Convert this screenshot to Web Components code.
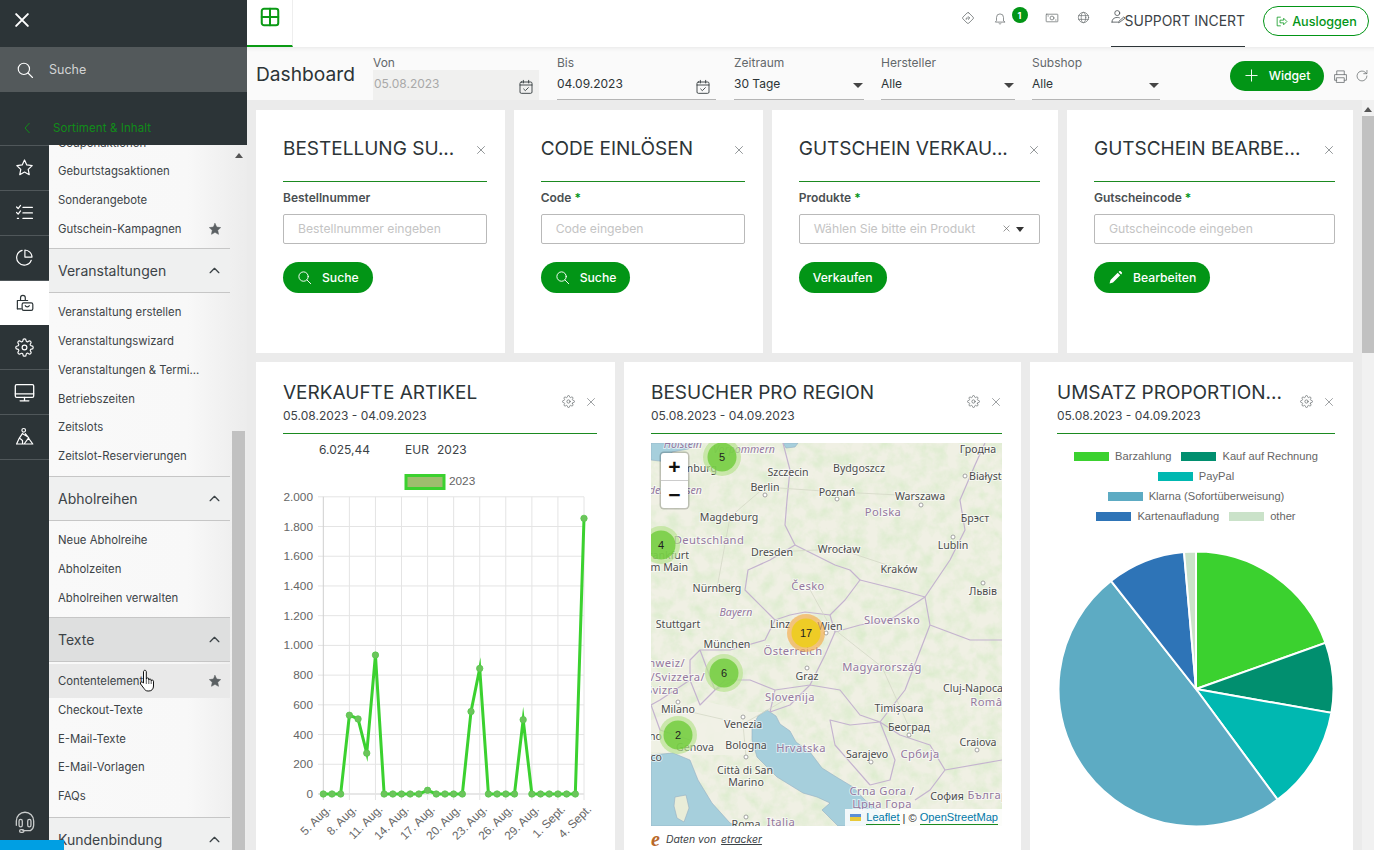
<!DOCTYPE html>
<html lang="de">
<head>
<meta charset="utf-8">
<title>Dashboard</title>
<style>
  html, body { margin: 0; padding: 0; height: 100%; overflow: hidden; }
  body { font-family: Inter, "Noto Sans", "Liberation Sans", sans-serif; color: #2c3437; background: #ebebeb; }
</style>
</head>
<body>
<app-shell>
  <side-nav slot="nav">
    <nav-group>
      <nav-item>Couponaktionen</nav-item>
      <nav-item>Geburtstagsaktionen</nav-item>
      <nav-item>Sonderangebote</nav-item>
      <nav-item star>Gutschein-Kampagnen</nav-item>
    </nav-group>
    <nav-group label="Veranstaltungen">
      <nav-item>Veranstaltung erstellen</nav-item>
      <nav-item>Veranstaltungswizard</nav-item>
      <nav-item>Veranstaltungen &amp; Termi...</nav-item>
      <nav-item>Betriebszeiten</nav-item>
      <nav-item>Zeitslots</nav-item>
      <nav-item>Zeitslot-Reservierungen</nav-item>
    </nav-group>
    <nav-group label="Abholreihen" style="--pt:5.3px">
      <nav-item>Neue Abholreihe</nav-item>
      <nav-item>Abholzeiten</nav-item>
      <nav-item>Abholreihen verwalten</nav-item>
    </nav-group>
    <nav-group label="Texte" active style="--pb:6.5px">
      <nav-item star hover>Contentelemente</nav-item>
      <nav-item>Checkout-Texte</nav-item>
      <nav-item>E-Mail-Texte</nav-item>
      <nav-item>E-Mail-Vorlagen</nav-item>
      <nav-item>FAQs</nav-item>
    </nav-group>
    <nav-group label="Kundenbindung"></nav-group>
  </side-nav>

  <top-bar slot="top"></top-bar>

  <dash-toolbar slot="tools">
    <filter-field label="Von" value="05.08.2023" kind="date" disabled style="width:166px"></filter-field>
    <filter-field label="Bis" value="04.09.2023" kind="date" style="width:159px;margin-left:1px"></filter-field>
    <filter-field label="Zeitraum" value="30 Tage" kind="select" style="width:130px;margin-left:1px"></filter-field>
    <filter-field label="Hersteller" value="Alle" kind="select" style="width:134px"></filter-field>
    <filter-field label="Subshop" value="Alle" kind="select" style="width:128px"></filter-field>
  </dash-toolbar>

  <widget-area slot="content">
    <widget-row columns="249px 249.4px 286.6px 286px" gap="8.67px">
      <form-widget heading="BESTELLUNG SU..." label="Bestellnummer" placeholder="Bestellnummer eingeben" action="Suche" icon="search"></form-widget>
      <form-widget heading="CODE EINLÖSEN" label="Code" required placeholder="Code eingeben" action="Suche" icon="search"></form-widget>
      <form-widget heading="GUTSCHEIN VERKAU..." label="Produkte" required placeholder="Wählen Sie bitte ein Produkt" select action="Verkaufen"></form-widget>
      <form-widget heading="GUTSCHEIN BEARBE..." label="Gutscheincode" required placeholder="Gutscheincode eingeben" action="Bearbeiten" icon="pencil"></form-widget>
    </widget-row>
    <widget-row columns="359px 397px 323px" gap="9px">
      <widget-card heading="VERKAUFTE ARTIKEL" dates="05.08.2023 - 04.09.2023"><line-chart></line-chart></widget-card>
      <widget-card heading="BESUCHER PRO REGION" dates="05.08.2023 - 04.09.2023" style="padding-right:19px"><map-panel></map-panel></widget-card>
      <widget-card heading="UMSATZ PROPORTION..." dates="05.08.2023 - 04.09.2023"><pie-chart></pie-chart></widget-card>
    </widget-row>
  </widget-area>
</app-shell>

<script>
const ICONS = {
  x: '<path d="M5 5l14 14M19 5L5 19"/>',
  search: '<circle cx="10.5" cy="10.5" r="7.5"/><path d="M16 16l6 6"/>',
  star: '<path d="M12 2.5l2.9 6.2 6.8.9-5 4.7 1.3 6.8-6-3.4-6 3.4 1.3-6.8-5-4.7 6.8-.9z"/>',
  checks: '<path d="M2 5l2 2 3-4M2 12l2 2 3-4M3 19.5h1.5M10 5.5h12M10 12.5h12M10 19.5h12"/>',
  pie: '<path d="M20.5 15.5A9.5 9.5 0 1 1 9 3"/><path d="M21.5 11.5A9.5 9.5 0 0 0 12.5 2.5v9z"/>',
  bag: '<path d="M3 20V9.5h13M7 9V6a3 3 0 0 1 6 0v3"/><rect x="9" y="12.5" width="13.5" height="9.5" rx="2"/><path d="M13 16c.5 2 4.5 2 5 0"/><path d="M3 20h5"/>',
  gear: '<circle cx="12" cy="12" r="3"/><path d="M19.4 15a1.65 1.65 0 0 0 .33 1.82l.06.06a2 2 0 0 1 0 2.83 2 2 0 0 1-2.83 0l-.06-.06a1.65 1.65 0 0 0-1.82-.33 1.65 1.65 0 0 0-1 1.51V21a2 2 0 0 1-2 2 2 2 0 0 1-2-2v-.09A1.65 1.65 0 0 0 9 19.4a1.65 1.65 0 0 0-1.82.33l-.06.06a2 2 0 0 1-2.83 0 2 2 0 0 1 0-2.83l.06-.06a1.65 1.65 0 0 0 .33-1.82 1.65 1.65 0 0 0-1.51-1H3a2 2 0 0 1-2-2 2 2 0 0 1 2-2h.09A1.65 1.65 0 0 0 4.6 9a1.65 1.65 0 0 0-.33-1.82l-.06-.06a2 2 0 0 1 0-2.83 2 2 0 0 1 2.83 0l.06.06a1.65 1.65 0 0 0 1.82.33H9a1.65 1.65 0 0 0 1-1.51V3a2 2 0 0 1 2-2 2 2 0 0 1 2 2v.09a1.65 1.65 0 0 0 1 1.51 1.65 1.65 0 0 0 1.82-.33l.06-.06a2 2 0 0 1 2.83 0 2 2 0 0 1 0 2.83l-.06.06a1.65 1.65 0 0 0-.33 1.82V9a1.65 1.65 0 0 0 1.51 1H21a2 2 0 0 1 2 2 2 2 0 0 1-2 2h-.09a1.65 1.65 0 0 0-1.51 1z"/>',
  monitor: '<rect x="1.5" y="3" width="21" height="14.5" rx="1.5"/><path d="M1.5 13.5h21M12 17.5v4M7 21.5h10"/>',
  worker: '<circle cx="11" cy="4.2" r="2.3"/><path d="M9.5 8L5.5 14 2 21.5M5.5 14l4 3v4.5M9.5 8.5l6 3.5M13 8.5l4.5 5.5M11.5 21.5L17 14l5.5 7.5zM2 21.5h20"/>',
  headset: '<path d="M4 15V11a8 8 0 0 1 16 0v4a6 6 0 0 1-3 5H10"/><rect x="6.5" y="9.5" width="3" height="7" rx="1.5"/><rect x="14.5" y="9.5" width="3" height="7" rx="1.5"/><rect x="7" y="19" width="4" height="2.6" rx="1.3"/>',
  chevron: '<path d="M5 15.5l7-7 7 7"/>',
  grid: '<rect x="3" y="3" width="18" height="18" rx="2.5"/><path d="M3 12h18M12 3v18"/>',
  diamond: '<rect x="4.8" y="4.8" width="14.4" height="14.4" rx="2" transform="rotate(45 12 12)"/><path d="M9 14.5v-2.5h5M12.5 9.5l2.5 2.5-2.5 2.5"/>',
  bell: '<path d="M18 16.5V11a6 6 0 0 0-12 0v5.5L4 19h16zM10 21.5c.5 1 3.5 1 4 0"/>',
  money: '<rect x="2" y="5.5" width="20" height="13" rx="1"/><circle cx="12" cy="12" r="3.3"/><path d="M5 8.5h1M18 15.5h1"/>',
  globe: '<circle cx="12" cy="12" r="9.5"/><ellipse cx="12" cy="12" rx="4.2" ry="9.5"/><path d="M3 8.5h18M3 15.5h18"/>',
  useredit: '<circle cx="10" cy="6.5" r="4"/><path d="M1.5 21c0-5 3.5-7.5 8.5-7.5 1.5 0 2.5.2 3.5.6M1.5 21h9M14 21l-2 1 .6-2.4 8-7 1.6 1.6z"/>',
  logout: '<path d="M10 4H4v16h6"/><path d="M10 9.5h6V6l6 6-6 6v-3.5h-6z"/>',
  plus: '<path d="M12 3v18M3 12h18"/>',
  print: '<path d="M6 9V3h12v6M6 18H2.5v-9h19v9H18"/><rect x="6" y="14" width="12" height="7.5"/>',
  refresh: '<path d="M20.5 12a8.5 8.5 0 1 1-3-6.5L20 8M20.5 2.5V8H15"/>',
  calendar: '<rect x="3" y="4.5" width="18" height="17" rx="2"/><path d="M3 9h18M8 2v4M16 2v4M8.5 15l2.5 2.5 4.5-4.5"/>',
  pencil: '<path fill="currentColor" stroke="none" d="M15.5 4.5l4 4L8 20l-5.5 1.5L4 16zM17 3l1-1c.8-.7 1.6-.7 2.3 0l1.7 1.7c.7.7.7 1.5 0 2.3l-1 1z"/>'
};

class UiIcon extends HTMLElement {
  connectedCallback() {
    const size = this.getAttribute('size') || 16;
    const sw = this.getAttribute('stroke') || 1.6;
    const fill = this.hasAttribute('solid') ? 'currentColor' : 'none';
    this.attachShadow({ mode: 'open' }).innerHTML = `
      <style>:host{display:inline-flex;flex:none;line-height:0}</style>
      <svg width="${size}" height="${size}" viewBox="0 0 24 24" fill="${fill}" stroke="currentColor"
        stroke-width="${sw}" stroke-linecap="round" stroke-linejoin="round">${ICONS[this.getAttribute('name')] || ''}</svg>`;
  }
}
customElements.define('ui-icon', UiIcon);

class AppShell extends HTMLElement {
  constructor() {
    super();
    this.attachShadow({ mode: 'open' }).innerHTML = `
      <style>
        :host { display: grid; grid-template-columns: 247px 1fr; width: 1374px; height: 850px; overflow: hidden; position: relative; }
        .main { display: grid; grid-template-rows: 47px 53px 1fr; min-width: 0; height: 850px; overflow: hidden; }
      </style>
      <slot name="nav"></slot>
      <div class="main">
        <slot name="top"></slot>
        <slot name="tools"></slot>
        <slot name="content"></slot>
      </div>`;
  }
}
customElements.define('app-shell', AppShell);

class SideNav extends HTMLElement {
  constructor() {
    super();
    const rail = [['star'], ['checks'], ['pie'], ['bag', true], ['gear'], ['monitor'], ['worker']]
      .map(([n, on]) => `<div class="rail-item ${on ? 'on' : ''}"><ui-icon name="${n}" size="${n === 'monitor' ? 21 : 19}" stroke="1.5"></ui-icon></div>`).join('');
    this.attachShadow({ mode: 'open' }).innerHTML = `
      <style>
        :host { display: flex; flex-direction: column; height: 850px; background: #2c3437; position: relative; overflow: hidden; }
        .close { height: 47px; flex: none; display: flex; align-items: center; padding: 0 0 7px 12px; box-sizing: border-box; color: #fff; }
        .search { height: 45px; flex: none; background: #53595b; display: flex; align-items: center; color: #fff; padding-left: 16px; gap: 15px; font-size: 12.5px; }
        .search span { color: #d2d4d4; }
        .section { height: 53px; flex: none; display: flex; align-items: center; color: #118c19; font-size: 11.5px; padding: 18px 0 0 24px; box-sizing: border-box; gap: 23px; letter-spacing: .1px; }
        .body { flex: 1; display: flex; min-height: 0; }
        .rail { width: 49px; flex: none; display: flex; flex-direction: column; color: #fff; border-top: 1px solid #50575a; padding-bottom: 15px; box-sizing: border-box; }
        .rail-item { height: 44.85px; flex: none; display: flex; align-items: center; justify-content: center; border-bottom: 1px solid #50575a; box-sizing: border-box; }
        .rail-item.on { background: #fff; color: #2c3437; border-bottom-color: #fff; }
        .help { margin-top: auto; display: flex; justify-content: center; color: #c9cccc; }
        .panel { flex: 1; min-width: 0; display: flex; background: linear-gradient(90deg, #f9f9f9 0, #f8f8f8 70%, #ececec 100%); overflow: hidden; }
        .list { width: 181px; flex: none; margin-top: -21px; }
        .scroll { width: 14px; margin-left: 2px; position: relative; display: flex; flex-direction: column; }
        .arrow { width: 0; height: 0; border: 4px solid transparent; border-top: 0; border-bottom: 5px solid #555; margin: 8px auto 0; }
        .thumb { position: absolute; top: 286px; bottom: 0; left: 0; width: 13px; background: #c1c1c1; }
        .blue { position: absolute; left: 0; bottom: 0; width: 64px; height: 10px; background: #009fe3; }
      </style>
      <div class="close"><ui-icon name="x" size="20" stroke="2.4"></ui-icon></div>
      <div class="search"><ui-icon name="search" size="18" stroke="1.5"></ui-icon><span>Suche</span></div>
      <div class="section"><svg width="6" height="12" viewBox="0 0 6 12" fill="none" stroke="#118c19"><path d="M5.5 1L1 6l4.5 5"/></svg><span>Sortiment &amp; Inhalt</span></div>
      <div class="body">
        <div class="rail">${rail}<div class="help"><ui-icon name="headset" size="26" stroke="1.2"></ui-icon></div></div>
        <div class="panel">
          <div class="list"><slot></slot></div>
          <div class="scroll"><div class="arrow"></div><div class="thumb"></div></div>
        </div>
      </div>
      <div class="blue"></div>`;
  }
}
customElements.define('side-nav', SideNav);

class NavGroup extends HTMLElement {
  connectedCallback() {
    const label = this.getAttribute('label');
    const head = label ? `<div class="head ${this.hasAttribute('active') ? 'active' : ''}"><span>${label}</span><ui-icon name="chevron" size="15" stroke="2"></ui-icon></div>` : '';
    this.attachShadow({ mode: 'open' }).innerHTML = `
      <style>
        :host { display: block; }
        .head { height: 45px; box-sizing: border-box; border-top: 1px solid #c6c6c6; border-bottom: 1px solid #c6c6c6; background: #eff0f0; display: flex; align-items: center; justify-content: space-between; padding: 0 8px 0 9px; font-size: 14px; color: #3c4347; }
        .head.active { background: #dedfdf; }
        .items { padding: var(--pt, 4.3px) 0 var(--pb, 5px); }
      </style>
      ${head}<div class="items"><slot></slot></div>`;
  }
}
customElements.define('nav-group', NavGroup);

class NavItem extends HTMLElement {
  connectedCallback() {
    const star = this.hasAttribute('star') ? '<ui-icon name="star" size="14" solid stroke="1" style="color:#5b6063"></ui-icon>' : '';
    const hover = this.hasAttribute('hover');
    const cursor = hover ? `<svg class="hand" width="18" height="24" viewBox="0 0 18 24"><path fill="#fff" stroke="#111" stroke-width="1" stroke-linejoin="round" d="M4.5 14V2.8c0-2 2.8-2 2.8 0V10c0-1.4 2.5-1.4 2.5 0v1c0-1.3 2.4-1.3 2.4 0v1c0-1.2 2.3-1.2 2.3.2V17c0 3-1.8 5-4.6 5H9c-2 0-3-.8-4-2.5L1.6 15c-1-1.6 1-2.8 2.1-1.6z"/><path d="M7.3 10v5M9.8 11v4M12.2 12v3" stroke="#111" stroke-width=".7"/></svg>` : '';
    this.attachShadow({ mode: 'open' }).innerHTML = `
      <style>
        :host { display: flex; align-items: center; justify-content: space-between; height: ${hover ? 33.6 : 28.8}px; box-sizing: border-box; padding: 0 8px 0 9px; font-size: 11.35px; color: #3c4347; position: relative; ${hover ? 'background:#e9e9e9; margin: -2.4px 0;' : ''} }
        .hand { position: absolute; left: 90px; top: 5px; }
      </style>
      <span><slot></slot></span>${star}${cursor}`;
  }
}
customElements.define('nav-item', NavItem);

class TopBar extends HTMLElement {
  constructor() {
    super();
    this.attachShadow({ mode: 'open' }).innerHTML = `
      <style>
        :host { display: flex; align-items: stretch; background: #fff; height: 47px; color: #6b7072; }
        .tab { width: 46px; box-sizing: border-box; display: flex; align-items: center; justify-content: center; padding-bottom: 11px; color: #0a9a14; border-bottom: 2px solid #0a9a14; border-right: 1px solid #eee; }
        .right { margin-left: auto; display: flex; align-items: center; padding-right: 5px; }
        .ic { width: 32px; display: flex; justify-content: center; position: relative; padding-bottom: 12px; }
        .badge { position: absolute; left: 28px; top: -3.5px; width: 16px; height: 16px; border-radius: 50%; background: #029516; color: #fff; font-size: 9px; font-weight: 700; display: flex; align-items: center; justify-content: center; }
        .user { display: flex; align-items: center; align-self: stretch; margin-left: 11px; border-bottom: 1px solid #2c3437; box-sizing: border-box; font-size: 13.95px; color: #3c4347; padding-bottom: 6px; }
        .user span { margin-left: -1px; }
        .user ui-icon { margin-top: -7px; }
        .logout { margin-left: 18px; width: 106px; height: 30px; box-sizing: border-box; border: 1px solid #029516; border-radius: 15px; color: #029516; display: flex; align-items: center; justify-content: center; gap: 4px; font-size: 12.6px; font-weight: 500; margin-top: -5px; }
      </style>
      <div class="tab"><ui-icon name="grid" size="22" stroke="2.2"></ui-icon></div>
      <div class="right">
        <div class="ic"><ui-icon name="diamond" size="14" stroke="1.3"></ui-icon></div>
        <div class="ic"><ui-icon name="bell" size="14" stroke="1.3"></ui-icon><span class="badge">1</span></div>
        <div class="ic" style="margin-left:20px"><ui-icon name="money" size="14" stroke="1.3"></ui-icon></div>
        <div class="ic"><ui-icon name="globe" size="13" stroke="1.3"></ui-icon></div>
        <div class="user"><ui-icon name="useredit" size="15" stroke="1.2"></ui-icon><span>SUPPORT INCERT</span></div>
        <div class="logout"><ui-icon name="logout" size="13" stroke="1.4"></ui-icon>Ausloggen</div>
      </div>`;
  }
}
customElements.define('top-bar', TopBar);

class DashToolbar extends HTMLElement {
  constructor() {
    super();
    this.attachShadow({ mode: 'open' }).innerHTML = `
      <style>
        :host { display: flex; align-items: flex-start; background: #fafafa; height: 53px; padding: 8px 5px 0 9px; box-sizing: border-box; box-shadow: inset 0 5px 4px -4px #e6e6e6; }
        h1 { margin: 7px 0 0; width: 117px; flex: none; font-size: 19.2px; font-weight: 400; color: #2c3437; line-height: 24px; }
        .fields { display: flex; gap: 17px; }
        .tools { margin-left: auto; display: flex; align-items: center; color: #6b7072; margin-top: 6px; }
        .btn { margin-right: 9px; }
        .tools ui-icon + ui-icon { margin-left: 7px; }
      </style>
      <h1>Dashboard</h1>
      <div class="fields"><slot></slot></div>
      <div class="tools">
        <pill-button icon="plus" class="btn" style="width:94px;height:30px">Widget</pill-button>
        <ui-icon name="print" size="15" stroke="1.3"></ui-icon>
        <ui-icon name="refresh" size="14" stroke="1.3"></ui-icon>
      </div>`;
  }
}
customElements.define('dash-toolbar', DashToolbar);

class FilterField extends HTMLElement {
  connectedCallback() {
    const off = this.hasAttribute('disabled');
    const date = this.getAttribute('kind') === 'date';
    const end = date
      ? '<ui-icon name="calendar" size="16" stroke="1.3" class="cal"></ui-icon>'
      : '<span class="caret"></span>';
    this.attachShadow({ mode: 'open' }).innerHTML = `
      <style>
        :host { display: block; flex: none; }
        label { display: block; font-size: 12px; line-height: 15px; color: #63686b; }
        .box { height: 30px; box-sizing: border-box; display: flex; align-items: center; justify-content: space-between; font-size: 12px; color: #2c3437; border-bottom: 1px solid #b5b5b5; padding: 0 ${date ? 5 : 1}px 3px 0; }
        .box.off { background: #f0f0ef; border-bottom-color: #f0f0ef; color: #a9a9a9; padding-left: 1px; }
        .cal { color: #2c3437; margin-top: 7px; }
        .caret { width: 0; height: 0; border: 5px solid transparent; border-top: 5px solid #444; border-bottom: 0; margin-top: 4px; }
      </style>
      <label>${this.getAttribute('label')}</label>
      <div class="box ${off ? 'off' : ''}"><span>${this.getAttribute('value')}</span>${end}</div>`;
  }
}
customElements.define('filter-field', FilterField);

class PillButton extends HTMLElement {
  connectedCallback() {
    const icon = this.getAttribute('icon');
    this.attachShadow({ mode: 'open' }).innerHTML = `
      <style>
        :host { display: inline-flex; align-items: center; justify-content: center; gap: 10px; height: 31px; padding: 0 14px 1px; box-sizing: border-box; border-radius: 16px; background: #029516; color: #fff; font-size: 12.2px; font-weight: 500; flex: none; }
      </style>
      ${icon ? `<ui-icon name="${icon}" size="15" stroke="1.5"></ui-icon>` : ''}<span><slot></slot></span>`;
  }
}
customElements.define('pill-button', PillButton);

class WidgetArea extends HTMLElement {
  constructor() {
    super();
    this.attachShadow({ mode: 'open' }).innerHTML = `
      <style>
        :host { display: flex; background: #ebebeb; min-height: 0; overflow: hidden; }
        .rows { width: 1115px; flex: none; box-sizing: border-box; padding: 10px 9px 0; display: flex; flex-direction: column; gap: 9px; }
        .bar { width: 12px; flex: none; background: #f1f1f1; position: relative; }
        .bar i { display: block; width: 0; height: 0; border: 4px solid transparent; border-top: 0; border-bottom: 5px solid #555; margin: 7px auto 0; }
        .bar b { display: block; margin-top: 4px; height: 237px; background: #c1c1c1; }
      </style>
      <div class="rows"><slot></slot></div>
      <div class="bar"><i></i><b></b></div>`;
  }
}
customElements.define('widget-area', WidgetArea);

class WidgetRow extends HTMLElement {
  connectedCallback() {
    this.attachShadow({ mode: 'open' }).innerHTML = `
      <style>:host { display: grid; grid-template-columns: ${this.getAttribute('columns')}; column-gap: ${this.getAttribute('gap')}; flex: none; }</style><slot></slot>`;
  }
}
customElements.define('widget-row', WidgetRow);

const CARD_STYLE = `
  :host { display: block; background: #fff; box-sizing: border-box; padding: 0 18px 0 27px; min-width: 0; }
  .head { display: flex; align-items: center; border-bottom: 1px solid #1b8a20; }
  h2 { margin: 0; font-size: 19px; line-height: 24px; font-weight: 400; color: #2c3437; white-space: nowrap; }
  .acts { margin-left: auto; display: flex; align-items: center; gap: 10px; color: #6b7072; }
  .date { font-size: 12px; line-height: 16px; color: #3c4347; margin-top: 3px; }
`;

class FormWidget extends HTMLElement {
  connectedCallback() {
    const a = n => this.getAttribute(n);
    const req = this.hasAttribute('required') ? ' <em>*</em>' : '';
    const tail = this.hasAttribute('select')
      ? '<ui-icon name="x" size="9" stroke="1.8" style="color:#666;margin-left:auto"></ui-icon><span class="caret"></span>' : '';
    this.attachShadow({ mode: 'open' }).innerHTML = `
      <style>
        ${CARD_STYLE}
        :host { height: 243px; }
        .head { height: 72px; padding-top: 6px; box-sizing: border-box; }
        .acts { color: #5a6063; margin-top: 3px; }
        label { display: block; margin-top: 8px; font-size: 12px; line-height: 15px; font-weight: 600; color: #4a4f52; }
        em { color: #029516; font-style: normal; }
        .input { margin-top: 9px; height: 30px; box-sizing: border-box; border: 1px solid #b9b9b9; border-radius: 2px; display: flex; align-items: center; padding: 0 15px 2px 14px; font-size: 12.2px; color: #c4c4c4; }
        .caret { width: 0; height: 0; border: 4px solid transparent; border-top: 5px solid #333; border-bottom: 0; margin: 2px 0 0 5px; }
        pill-button { margin-top: 18px; }
      </style>
      <div class="head"><h2>${a('heading')}</h2><div class="acts"><ui-icon name="x" size="12" stroke="1.3"></ui-icon></div></div>
      <label>${a('label')}${req}</label>
      <div class="input"><span>${a('placeholder')}</span>${tail}</div>
      <pill-button ${a('icon') ? `icon="${a('icon')}"` : ''}>${a('action')}</pill-button>`;
  }
}
customElements.define('form-widget', FormWidget);

class WidgetCard extends HTMLElement {
  connectedCallback() {
    this.attachShadow({ mode: 'open' }).innerHTML = `
      <style>
        ${CARD_STYLE}
        :host { height: 600px; }
        .head { height: 72px; padding: 19px 0 0; box-sizing: border-box; align-items: flex-start; }
        .acts { margin-top: 14px; }
      </style>
      <div class="head">
        <div><h2>${this.getAttribute('heading')}</h2><div class="date">${this.getAttribute('dates')}</div></div>
        <div class="acts"><ui-icon name="gear" size="13" stroke="1.4"></ui-icon><ui-icon name="x" size="12" stroke="1.3"></ui-icon></div>
      </div>
      <slot></slot>`;
  }
}
customElements.define('widget-card', WidgetCard);

class LineChart extends HTMLElement {
  constructor() {
    super();
    const vals = [0,0,0,530,505,275,935,0,0,0,0,0,25,0,0,0,0,555,845,0,0,0,0,500,0,0,0,0,0,0,1855];
    const ticks = ['5. Aug.','8. Aug.','11. Aug.','14. Aug.','17. Aug.','20. Aug.','23. Aug.','26. Aug.','29. Aug.','1. Sept.','4. Sept.'];
    const X = i => 323.3 + i * 8.69;
    const Y = v => 794 - v * 0.1486;
    let g = '';
    for (let v = 0; v <= 2000; v += 200) {
      g += `<line x1="318" x2="584" y1="${Y(v)}" y2="${Y(v)}" stroke="${v ? '#e4e4e4' : '#cfcfcf'}"/>`;
      g += `<text x="313" y="${Y(v) + 4}" text-anchor="end">${v ? v.toLocaleString('de-DE') : 0}</text>`;
    }
    ticks.forEach((t, i) => {
      const x = X(i * 3);
      g += `<line x1="${x}" x2="${x}" y1="${Y(2000)}" y2="800" stroke="${i ? '#e4e4e4' : '#cfcfcf'}"/>`;
      g += `<text transform="translate(${x + 8} 810) rotate(-45)" text-anchor="end">${t}</text>`;
    });
    const pts = vals.map((v, i) => `${X(i)},${Y(v)}`).join(' ');
    const dots = vals.map((v, i) => `<circle cx="${X(i)}" cy="${Y(v)}" r="3.2" fill="#6cc45c" stroke="#55c94a" stroke-width=".8"/>`).join('');
    this.attachShadow({ mode: 'open' }).innerHTML = `
      <style>
        :host { display: block; margin: 0 -18px 0 -27px; }
        .sum { display: flex; font-size: 12px; color: #3c4347; height: 15px; margin-top: 8px; padding-left: 63px; }
        .sum span:nth-child(1) { width: 86px; }
        .sum span:nth-child(2) { width: 32px; }
        svg { display: block; margin-top: 1px; }
        text { font: 11.8px "Liberation Sans", Arial, sans-serif; fill: #666; }
      </style>
      <div class="sum"><span>6.025,44</span><span>EUR</span><span>2023</span></div>
      <svg width="359" height="392" viewBox="256 458 359 392">
        <rect x="406" y="475.5" width="38" height="13" fill="#9ebd6e" stroke="#3bd12f" stroke-width="3"/>
        <text x="449" y="485">2023</text>
        ${g}
        <polyline points="${pts}" fill="none" stroke="#3bd12f" stroke-width="3" stroke-miterlimit="10"/>
        ${dots}
      </svg>`;
  }
}
customElements.define('line-chart', LineChart);

class MapPanel extends HTMLElement {
  constructor() {
    super();
    const labels = [
      [702,444,'Holstein','i','end'],[775,449,'Vorpommern','i','end'],[717,468,'Hamburg','','end'],[788,472,'Szczecin'],[859,468,'Bydgoszcz'],
      [978,449,'Гродна'],[969,476,'Białystok','','start'],[765,487,'Berlin'],[837,492,'Poznań'],[920,496,'Warszawa'],
      [702,490,'Niedersachsen','i','end'],[883,512,'Polska','p'],[729,517,'Magdeburg'],[975,518,'Брэст'],[709,540,'Deutschland','p'],
      [772,552,'Dresden'],[839,549,'Wrocław'],[953,545,'Lublin'],[899,569,'Kraków'],[689,555,'Frankfurt','','end'],[688,567,'am Main','','end'],
      [717,588,'Nürnberg'],[808,586,'Česko','p'],[983,591,'Львів'],[678,624,'Stuttgart'],[736,612,'Bayern','i'],[780,624,'Linz'],[830,626,'Wien'],
      [892,620,'Slovensko','p'],[727,644,'München'],[793,651,'Österreich','p'],[882,667,'Magyarország','p'],[807,676,'Graz'],
      [973,688,'Cluj-Napoca'],[995,702,'România','p'],[685,663,'Schweiz/','p','end'],[705,677,'Suisse/Svizzera/','p','end'],[679,690,'Svizra','p','end'],
      [790,697,'Slovenija','p'],[678,709,'Milano'],[899,708,'Timișoara'],[743,724,'Venezia'],[909,727,'Београд'],[746,745,'Bologna'],
      [801,748,'Hrvatska','p'],[695,747,'Genova'],[978,742,'Craiova'],[867,754,'Sarajevo'],[920,754,'Србија','p'],[745,770,'Città di San'],
      [746,782,'Marino'],[882,791,'Crna Gora /','p'],[882,804,'Црна Гора','p'],[947,796,'София'],[995,795,'България','p'],[746,824,'Roma'],
      [781,822,'Italia','p'],[662,736,'Torino','','end'],[662,757,'Monaco','','end']
    ].map(([x, y, t, c, a]) => `<text x="${x}" y="${y + 4}" class="${c || 'c'}" text-anchor="${a || 'middle'}">${t}</text>`).join('');
    const dots = [[765,495],[837,499],[921,505],[965,476],[807,668],[746,757],[871,762],[909,735],[826,633],[977,750],[953,537],[983,583],[743,717],[678,702],[746,817],[956,796]]
      .map(([x, y]) => `<circle cx="${x}" cy="${y}" r="2" fill="#fff" stroke="#8f8f8f" stroke-width=".8"/>`).join('');
    const clusters = [[722,457,5],[661,545,4],[724,673,6],[678,735,2]].map(([x, y, n]) => `
      <circle cx="${x}" cy="${y}" r="19" fill="rgba(181,226,140,.65)"/><circle cx="${x}" cy="${y}" r="14.5" fill="rgba(110,204,57,.8)"/>
      <text x="${x}" y="${y + 4}" text-anchor="middle" class="n">${n}</text>`).join('');
    this.attachShadow({ mode: 'open' }).innerHTML = `
      <style>
        :host { display: block; }
        .map { position: relative; width: 351px; height: 383px; margin-top: 9px; overflow: hidden; background: #eef0e2; }
        svg { display: block; }
        text { font: 10.6px "Noto Sans", "Open Sans", sans-serif; fill: #4c4c4c; paint-order: stroke; stroke: rgba(255,255,255,.6); stroke-width: 2px; }
        .p { fill: #94789f; font-size: 11.2px; letter-spacing: .4px; }
        .i { fill: #94789f; font-style: italic; }
        .n { font: 11px "Liberation Sans", Arial, sans-serif; fill: #222; stroke: none; }
        .zoom { position: absolute; left: 10px; top: 10px; width: 27px; background: #fff; border-radius: 3px; box-shadow: 0 0 0 1.5px rgba(0,0,0,.2); }
        .zoom div { height: 27px; display: flex; align-items: center; justify-content: center; font: 700 21px "Liberation Sans", Arial, sans-serif; color: #111; }
        .zoom div + div { border-top: 1px solid #ccc; }
        .attr { position: absolute; right: 0; bottom: 0; height: 17px; padding: 0 4px 0 5px; background: rgba(255,255,255,.85); display: flex; align-items: center; gap: 3px; font: 11.1px "Liberation Sans", Arial, sans-serif; color: #333; }
        .attr a { color: #0078a8; border-bottom: 1px solid #1b8a20; line-height: 13px; }
        .flag { display: inline-block; width: 11px; height: 7px; background: linear-gradient(#5a8fd8 50%, #e8c93a 50%); margin-right: 2px; }
        .src { margin-top: 5px; display: flex; align-items: center; gap: 6px; font-size: 10.4px; font-style: italic; color: #3c4347; }
        .src b { font: italic 700 20px "Liberation Serif", serif; color: #b9692a; line-height: 16px; }
        .src u { margin-left: 2px; }
      </style>
      <div class="map">
        <svg width="351" height="383" viewBox="651 443 351 383">
          <defs>
            <filter id="moss" x="0" y="0" width="100%" height="100%">
              <feTurbulence type="fractalNoise" baseFrequency="0.075" numOctaves="4" seed="7"/>
              <feColorMatrix values="0 0 0 0 .72  0 0 0 0 .84  0 0 0 0 .62  1.7 1.1 0 0 -1.12"/>
            </filter>
          </defs>
          <rect x="651" y="443" width="351" height="383" fill="#f0f0e4"/>
          <rect x="651" y="443" width="351" height="383" filter="url(#moss)"/>
          <path fill="#f1f1e6" d="M651 720L700 700 750 712 768 712 752 735 745 755 700 755 651 752z" opacity=".85"/>
          <g fill="#a6cfdc" stroke="#95afc2" stroke-width=".6">
            <path d="M651 443H700L688 449 672 452 668 462 651 460z"/>
            <path d="M783 443H798L795 447 786 448z"/>
            <path d="M767 710L776 716 780 724 790 731 796 742 810 752 822 768 838 778 853 787 865 800 880 812 872 826H838L822 810 830 803 817 797 803 793 777 777 757 757 752 740 752 728 758 716z"/>
            <path d="M651 755L673 753 690 760 698 780 712 803 730 823 737 826H651z"/>
          </g>
          <path d="M675 797L686 795 689 808 684 822 677 818 674 806z" fill="#e9edd8" stroke="#95afc2" stroke-width=".6"/>
          <g fill="none" stroke="#c4b3cf" stroke-width="1.2" stroke-linejoin="round">
            <path d="M783 443L790 470 787 500 785 525 795 545 770 560 748 570 745 590 770 615 775 620 765 640 730 650 700 650 690 660 690 680 675 690 660 700 651 705"/>
            <path d="M795 545L815 555 835 565 850 570 860 580 845 600 830 615 805 612 790 615 775 620"/>
            <path d="M860 580L880 585 900 590 925 597 950 560 965 530 960 500 975 465 985 443"/>
            <path d="M925 597L890 620 860 625 835 632 830 615M835 632L825 655 810 685 775 690 750 680 725 680"/>
            <path d="M810 685L790 705 770 712M775 690L770 712M810 685L840 690 860 715 880 722 850 725 830 720 835 745 870 785"/>
            <path d="M880 722L895 760 890 780 870 785M925 597L930 625 905 690 880 722 900 735 930 745 945 770 930 790 915 800M930 625L970 640 1002 640M945 770L1002 760"/>
            <path d="M700 650L715 690 735 680M690 680L700 705 725 680M651 705L660 730 690 740"/>
          </g>
          <g fill="none" stroke="#d4d8c6" stroke-width=".8">
            <path d="M765 487L730 517 717 588M765 487L837 492 920 496M772 552L839 549 899 569M808 586L830 626 882 667 909 727M743 724L746 757M678 709L743 724 790 697"/>
          </g>
          ${dots}${labels}
          <circle cx="806" cy="633" r="19" fill="rgba(245,170,70,.65)"/><circle cx="806" cy="633" r="14.5" fill="rgba(238,205,30,.92)"/>
          <text x="806" y="637" text-anchor="middle" class="n">17</text>
          ${clusters}
        </svg>
        <div class="zoom"><div>+</div><div>−</div></div>
        <div class="attr"><span class="flag"></span><a>Leaflet</a><span>| ©</span><a>OpenStreetMap</a></div>
      </div>
      <div class="src"><b>e</b><span>Daten von <u>etracker</u></span></div>`;
  }
}
customElements.define('map-panel', MapPanel);

class PieChart extends HTMLElement {
  constructor() {
    super();
    const cols = { Barzahlung: '#3bd12f', 'Kauf auf Rechnung': '#018f6f', PayPal: '#00b8b1', 'Klarna (Sofortüberweisung)': '#5dabc3', Kartenaufladung: '#2e74b7', other: '#cae2c9' };
    const rows = [['Barzahlung', 'Kauf auf Rechnung'], ['PayPal'], ['Klarna (Sofortüberweisung)'], ['Kartenaufladung', 'other']];
    const legend = rows.map(r => `<div class="row">${r.map(n => `<span class="li"><i style="background:${cols[n]}"></i>${n}</span>`).join('')}</div>`).join('');
    const ang = [0, 70.4, 100, 143.6, 321.8, 355, 360];
    const names = Object.keys(cols);
    const cx = 139, cy = 139, r = 137.5;
    const pt = a => [cx + r * Math.sin(a * Math.PI / 180), cy - r * Math.cos(a * Math.PI / 180)];
    const wedges = names.map((n, i) => {
      const [x1, y1] = pt(ang[i]), [x2, y2] = pt(ang[i + 1]);
      const big = ang[i + 1] - ang[i] > 180 ? 1 : 0;
      return `<path d="M${cx} ${cy}L${x1} ${y1}A${r} ${r} 0 ${big} 1 ${x2} ${y2}Z" fill="${cols[n]}" stroke="#fff" stroke-width="2"/>`;
    }).join('');
    this.attachShadow({ mode: 'open' }).innerHTML = `
      <style>
        :host { display: block; margin: 0 -18px 0 -27px; }
        .legend { margin: 12px 0 0 9px; display: flex; flex-direction: column; align-items: center; font: 11.15px "Liberation Sans", Arial, sans-serif; color: #666; }
        .row { height: 20px; display: flex; align-items: center; justify-content: center; gap: 10px; }
        .li { display: flex; align-items: center; gap: 6px; }
        i { display: block; width: 35px; height: 9px; box-shadow: 0 0 0 1px rgba(255,255,255,.8); }
        svg { display: block; margin: 24px 0 0 27px; }
      </style>
      <div class="legend">${legend}</div>
      <svg width="278" height="278" viewBox="0 0 278 278">${wedges}</svg>`;
  }
}
customElements.define('pie-chart', PieChart);
</script>
</body>
</html>
